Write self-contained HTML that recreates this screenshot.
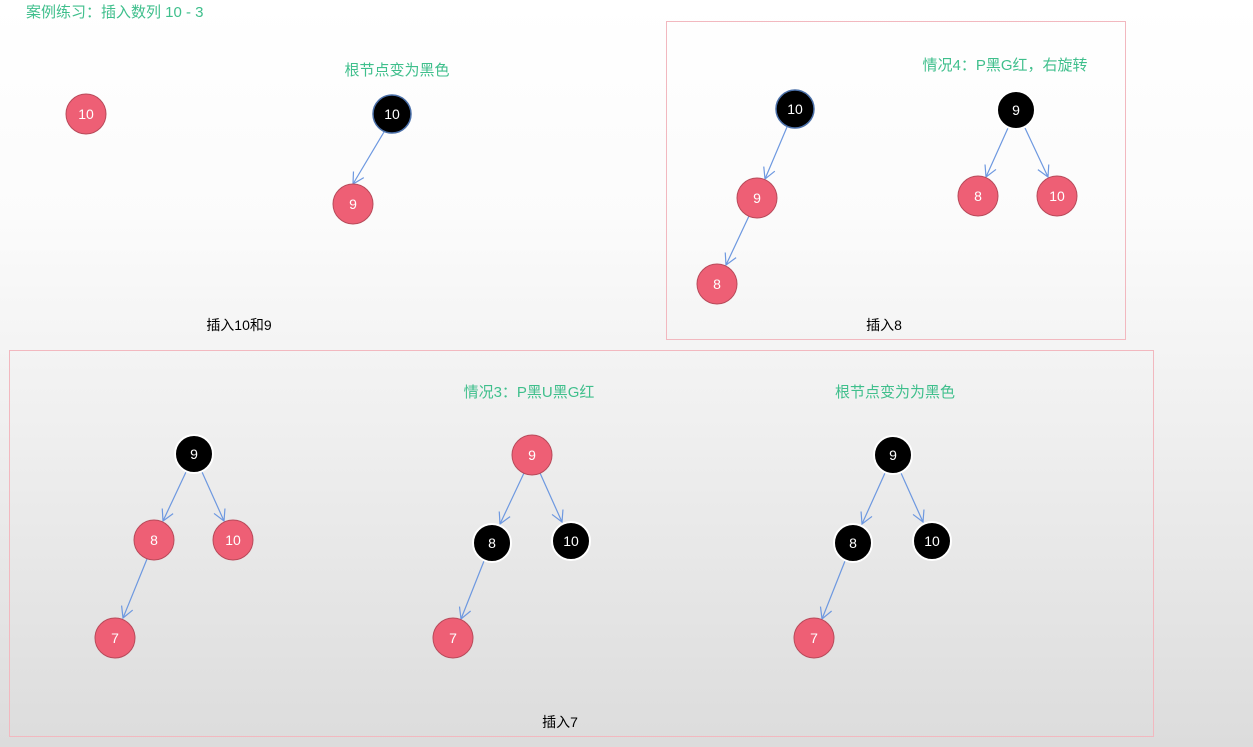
<!DOCTYPE html>
<html><head><meta charset="utf-8"><style>
html,body{margin:0;padding:0}
body{width:1253px;height:747px;overflow:hidden;background:linear-gradient(#fff 0%,#fbfbfb 30%,#eee 60%,#dcdcdc 100%);font-family:"Liberation Sans","Noto Sans CJK SC",sans-serif}
svg{position:absolute;left:0;top:0}
text{font-family:"Liberation Sans","Noto Sans CJK SC",sans-serif}
</style></head><body>
<svg width="1253" height="747" viewBox="0 0 1253 747">
<defs>
<marker id="a" markerWidth="14" markerHeight="14" refX="12" refY="7" orient="auto" markerUnits="userSpaceOnUse">
<path d="M1,1 L12,7 L1,13" fill="none" stroke="#6d98e0" stroke-width="1.2"/></marker>
</defs>
<rect x="666.5" y="21.5" width="459" height="318" fill="none" stroke="#f2b8bf"/>
<rect x="9.5" y="350.5" width="1144" height="386" fill="none" stroke="#f2b8bf"/>
<g fill="#3fbf8c" font-size="15">
<text x="26" y="17">案例练习：插入数列 10 - 3</text>
<text x="397" y="75" text-anchor="middle">根节点变为黑色</text>
<text x="1005" y="70" text-anchor="middle">情况4：P黑G红，右旋转</text>
<text x="529" y="397" text-anchor="middle">情况3：P黑U黑G红</text>
<text x="895" y="397" text-anchor="middle">根节点变为为黑色</text>
</g>
<g fill="#000" font-size="14" text-anchor="middle">
<text x="239" y="330">插入10和9</text>
<text x="884" y="330">插入8</text>
<text x="560" y="727">插入7</text>
</g>
<g stroke="#6d98e0" stroke-width="1.2" marker-end="url(#a)">
<line x1="384" y1="132" x2="353" y2="184"/>
<line x1="787" y1="127" x2="765" y2="179"/>
<line x1="749" y1="216" x2="726" y2="265"/>
<line x1="1008" y1="128" x2="986" y2="177"/>
<line x1="1025" y1="128" x2="1048" y2="177"/>
<line x1="186" y1="472" x2="163" y2="521"/>
<line x1="202" y1="472" x2="224" y2="521"/>
<line x1="147" y1="559" x2="123" y2="618"/>
<line x1="524" y1="473" x2="500" y2="524"/>
<line x1="540" y1="473" x2="562" y2="522"/>
<line x1="484" y1="561" x2="461" y2="619"/>
<line x1="885" y1="473" x2="862" y2="524"/>
<line x1="901" y1="473" x2="923" y2="522"/>
<line x1="845" y1="561" x2="822" y2="619"/>
</g>
<g stroke="#b84a5a" stroke-width="1" fill="#ee5f75">
<circle cx="86" cy="114" r="20"/><circle cx="353" cy="204" r="20"/>
<circle cx="757" cy="198" r="20"/><circle cx="717" cy="284" r="20"/>
<circle cx="978" cy="196" r="20"/><circle cx="1057" cy="196" r="20"/>
<circle cx="154" cy="540" r="20"/><circle cx="233" cy="540" r="20"/><circle cx="115" cy="638" r="20"/>
<circle cx="532" cy="455" r="20"/><circle cx="453" cy="638" r="20"/><circle cx="814" cy="638" r="20"/>
</g>
<g fill="#000" stroke="#fff" stroke-width="2">
<circle cx="392" cy="114" r="19" stroke="#4a6fa8" stroke-width="1.5"/>
<circle cx="795" cy="109" r="19" stroke="#4a6fa8" stroke-width="1.5"/>
<circle cx="1016" cy="110" r="19"/>
<circle cx="194" cy="454" r="19"/>
<circle cx="492" cy="543" r="19"/><circle cx="571" cy="541" r="19"/>
<circle cx="893" cy="455" r="19"/><circle cx="853" cy="543" r="19"/><circle cx="932" cy="541" r="19"/>
</g>
<g fill="#fff" font-size="14" text-anchor="middle">
<text x="86" y="119">10</text><text x="353" y="209">9</text>
<text x="392" y="119">10</text>
<text x="795" y="114">10</text><text x="757" y="203">9</text><text x="717" y="289">8</text>
<text x="1016" y="115">9</text><text x="978" y="201">8</text><text x="1057" y="201">10</text>
<text x="194" y="459">9</text><text x="154" y="545">8</text><text x="233" y="545">10</text><text x="115" y="643">7</text>
<text x="532" y="460">9</text><text x="492" y="548">8</text><text x="571" y="546">10</text><text x="453" y="643">7</text>
<text x="893" y="460">9</text><text x="853" y="548">8</text><text x="932" y="546">10</text><text x="814" y="643">7</text>
</g>
</svg>
</body></html>
